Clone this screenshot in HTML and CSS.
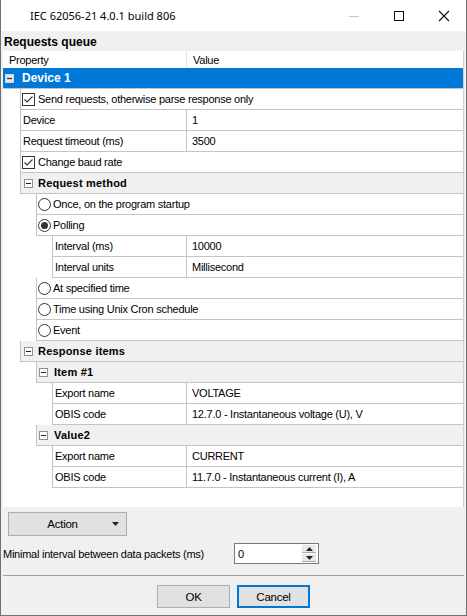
FILE: index.html
```html
<!DOCTYPE html>
<html>
<head>
<meta charset="utf-8">
<link rel="stylesheet" href="styles.css">
</head>
<body>
<div class="window">
  <div class="titlebar">
    <span class="title">IEC 62056-21 4.0.1 build 806</span>
    <div class="controls">
      <span class="ctl"><svg width="12" height="12" viewBox="0 0 12 12"><path d="M1 6.5H11" stroke="#c8c8c8" stroke-width="1"/></svg></span>
      <span class="ctl"><svg width="12" height="12" viewBox="0 0 12 12"><rect x="1.5" y="1.5" width="9" height="9" fill="none" stroke="#111" stroke-width="1"/></svg></span>
      <span class="ctl"><svg width="12" height="12" viewBox="0 0 12 12"><path d="M1 1L11 11M11 1L1 11" stroke="#111" stroke-width="1.1"/></svg></span>
    </div>
  </div>
  <div class="client">
    <div class="group-title">Requests queue</div>
    <div class="grid">
      <div class="head">
        <div class="hcell hprop">Property</div>
        <div class="hcell">Value</div>
      </div>
      <div class="root">
        <svg class="exp" width="9" height="9" viewBox="0 0 9 9"><rect x="0.5" y="0.5" width="8" height="8" fill="#e8e8e8" stroke="#c9d6e6"/><path d="M2 4.5H7" stroke="#1f3c6e" stroke-width="1.4"/></svg>
        <span>Device 1</span>
      </div>

      <div class="row l1 opt">
        <svg class="chk" width="13" height="13" viewBox="0 0 13 13"><rect x="0.5" y="0.5" width="12" height="12" fill="#fff" stroke="#333"/><path d="M2.5 6.5L5 9L10.5 3.5" fill="none" stroke="#333" stroke-width="1.1"/></svg>
        <span>Send requests, otherwise parse response only</span>
      </div>
      <div class="row l1"><div class="prop">Device</div><div class="val">1</div></div>
      <div class="row l1"><div class="prop">Request timeout (ms)</div><div class="val">3500</div></div>
      <div class="row l1 opt">
        <svg class="chk" width="13" height="13" viewBox="0 0 13 13"><rect x="0.5" y="0.5" width="12" height="12" fill="#fff" stroke="#333"/><path d="M2.5 6.5L5 9L10.5 3.5" fill="none" stroke="#333" stroke-width="1.1"/></svg>
        <span>Change baud rate</span>
      </div>
      <div class="row l1 cat">
        <svg class="exp" width="9" height="9" viewBox="0 0 9 9"><rect x="0.5" y="0.5" width="8" height="8" fill="#fff" stroke="#919191"/><path d="M2 4.5H7" stroke="#222" stroke-width="1"/></svg>
        <span>Request method</span>
      </div>
      <div class="row l2 opt">
        <svg class="rad" width="13" height="13" viewBox="0 0 13 13"><circle cx="6.5" cy="6.5" r="6" fill="#fff" stroke="#333"/></svg>
        <span>Once, on the program startup</span>
      </div>
      <div class="row l2 opt">
        <svg class="rad" width="13" height="13" viewBox="0 0 13 13"><circle cx="6.5" cy="6.5" r="6" fill="#fff" stroke="#333"/><circle cx="6.5" cy="6.5" r="3.5" fill="#333"/></svg>
        <span>Polling</span>
      </div>
      <div class="row l3"><div class="prop">Interval (ms)</div><div class="val">10000</div></div>
      <div class="row l3"><div class="prop">Interval units</div><div class="val">Millisecond</div></div>
      <div class="row l2 opt">
        <svg class="rad" width="13" height="13" viewBox="0 0 13 13"><circle cx="6.5" cy="6.5" r="6" fill="#fff" stroke="#333"/></svg>
        <span>At specified time</span>
      </div>
      <div class="row l2 opt">
        <svg class="rad" width="13" height="13" viewBox="0 0 13 13"><circle cx="6.5" cy="6.5" r="6" fill="#fff" stroke="#333"/></svg>
        <span>Time using Unix Cron schedule</span>
      </div>
      <div class="row l2 opt">
        <svg class="rad" width="13" height="13" viewBox="0 0 13 13"><circle cx="6.5" cy="6.5" r="6" fill="#fff" stroke="#333"/></svg>
        <span>Event</span>
      </div>
      <div class="row l1 cat">
        <svg class="exp" width="9" height="9" viewBox="0 0 9 9"><rect x="0.5" y="0.5" width="8" height="8" fill="#fff" stroke="#919191"/><path d="M2 4.5H7" stroke="#222" stroke-width="1"/></svg>
        <span>Response items</span>
      </div>
      <div class="row l2 cat">
        <svg class="exp" width="9" height="9" viewBox="0 0 9 9"><rect x="0.5" y="0.5" width="8" height="8" fill="#fff" stroke="#919191"/><path d="M2 4.5H7" stroke="#222" stroke-width="1"/></svg>
        <span>Item #1</span>
      </div>
      <div class="row l3"><div class="prop">Export name</div><div class="val">VOLTAGE</div></div>
      <div class="row l3"><div class="prop">OBIS code</div><div class="val">12.7.0 - Instantaneous voltage (U), V</div></div>
      <div class="row l2 cat">
        <svg class="exp" width="9" height="9" viewBox="0 0 9 9"><rect x="0.5" y="0.5" width="8" height="8" fill="#fff" stroke="#919191"/><path d="M2 4.5H7" stroke="#222" stroke-width="1"/></svg>
        <span>Value2</span>
      </div>
      <div class="row l3"><div class="prop">Export name</div><div class="val">CURRENT</div></div>
      <div class="row l3"><div class="prop">OBIS code</div><div class="val">11.7.0 - Instantaneous current (I), A</div></div>
    </div>

    <div class="action">
      <span class="action-label">Action</span>
      <svg class="drop" width="7" height="4" viewBox="0 0 7 4"><path d="M0 0H7L3.5 4Z" fill="#222"/></svg>
    </div>

    <div class="interval">
      <span class="interval-label">Minimal interval between data packets (ms)</span>
      <div class="spin">
        <span class="spin-val">0</span>
        <div class="spin-btns">
          <span class="sb"><svg width="7" height="4" viewBox="0 0 7 4"><path d="M0 4H7L3.5 0Z" fill="#222"/></svg></span>
          <span class="sb"><svg width="7" height="4" viewBox="0 0 7 4"><path d="M0 0H7L3.5 4Z" fill="#222"/></svg></span>
        </div>
      </div>
    </div>

    <div class="sep"></div>

    <div class="buttons">
      <div class="btn">OK</div>
      <div class="btn default">Cancel</div>
    </div>
  </div>
</div>
</body>
</html>
```

FILE: styles.css
```css
html, body {
  margin: 0;
  padding: 0;
  background: #f0f0f0;
}
body {
  font-family: "Liberation Sans", Arial, sans-serif;
  font-size: 11px;
  letter-spacing: -0.25px;
  color: #000;
}
.window {
  width: 467px;
  height: 616px;
  box-sizing: border-box;
  border: 1px solid #707070;
  border-top: none;
  background: #f0f0f0;
  display: flex;
  flex-direction: column;
}
.titlebar {
  height: 31px;
  flex: 0 0 31px;
  background: #fff;
  display: flex;
  align-items: center;
}
.title {
  font-family: "Noto Sans", "Liberation Sans", sans-serif;
  font-size: 11px;
  letter-spacing: 0;
  margin-left: 29px;
  color: #000;
  flex: 1;
}
.controls {
  display: flex;
  height: 31px;
}
.ctl {
  width: 45px;
  display: flex;
  align-items: center;
  justify-content: center;
}
.client {
  flex: 1;
  display: flex;
  flex-direction: column;
}
.group-title {
  height: 20px;
  line-height: 22px;
  padding-left: 3px;
  font-weight: bold;
  font-size: 12px;
  letter-spacing: 0;
}
.grid {
  margin-left: 2px;
  width: 461px;
  height: 456px;
  box-sizing: border-box;
  background: #fff;
  border-right: 1px solid #d0d0d0;
  display: flex;
  flex-direction: column;
}
.head {
  height: 17px;
  flex: 0 0 17px;
  display: flex;
}
.hcell {
  line-height: 18px;
  padding-left: 6px;
  color: #000;
}
.hprop {
  width: 184px;
  box-sizing: border-box;
  border-right: 1px solid #e4e4e4;
}
.root {
  height: 21px;
  flex: 0 0 21px;
  box-sizing: border-box;
  background: #0078d7;
  border-bottom: 1px solid #c4c4c4;
  color: #fff;
  display: flex;
  align-items: center;
  font-weight: bold;
  font-size: 12px;
  letter-spacing: 0;
}
.root .exp {
  margin-left: 2px;
  margin-right: 8px;
}
.row {
  height: 20px;
  flex: 0 0 20px;
  border-bottom: 1px solid #c4c4c4;
  border-left: 1px solid #c4c4c4;
  display: flex;
  align-items: center;
  background: #fff;
}
.l1 { margin-left: 17px; }
.l2 { margin-left: 33px; }
.l3 { margin-left: 49px; }
.prop {
  height: 20px;
  line-height: 21px;
  padding-left: 2px;
  box-sizing: border-box;
  border-right: 1px solid #c4c4c4;
}
.l1 .prop { width: 166px; }
.l3 .prop { width: 134px; }
.val {
  padding-left: 5px;
  line-height: 21px;
  white-space: nowrap;
}
.opt span {
  line-height: 21px;
}
.opt .chk {
  margin-left: 1px;
  margin-right: 3px;
}
.opt .rad {
  margin-left: 1px;
  margin-right: 2px;
}
.cat {
  background: #f0f0f0;
  font-weight: bold;
  letter-spacing: 0.2px;
}
.cat span {
  line-height: 21px;
}
.cat .exp {
  margin-left: 3px;
  margin-right: 5px;
}
.l2.cat .exp {
  margin-left: 2px;
  margin-right: 6px;
}
.action {
  margin-top: 5px;
  margin-left: 7px;
  width: 119px;
  height: 24px;
  flex: 0 0 24px;
  box-sizing: border-box;
  background: #e1e1e1;
  border: 1px solid #adadad;
  display: flex;
  align-items: center;
}
.action-label {
  flex: 1;
  text-align: center;
  padding-left: 4px;
  font-size: 11.5px;
}
.drop {
  margin-right: 7px;
}
.interval {
  margin-top: 7px;
  display: flex;
  align-items: center;
  height: 21px;
}
.interval-label {
  flex: 0 0 231px;
  padding-left: 2px;
}
.spin {
  width: 85px;
  height: 21px;
  box-sizing: border-box;
  border: 1px solid #7a7a7a;
  background: #fff;
  display: flex;
  align-items: center;
}
.spin-val {
  flex: 1;
  padding-left: 3px;
}
.spin-btns {
  display: flex;
  flex-direction: column;
  margin-right: 2px;
  gap: 1px;
}
.sb {
  width: 14px;
  height: 7px;
  background: #e8e8e8;
  border-bottom: 1px solid #aaa;
  display: flex;
  align-items: center;
  justify-content: center;
}
.sep {
  margin-top: 11px;
  margin-left: 2px;
  width: 461px;
  height: 1px;
  background: #a0a0a0;
}
.buttons {
  margin-top: 9px;
  display: flex;
  justify-content: center;
  gap: 7px;
}
.btn {
  width: 73px;
  height: 23px;
  box-sizing: border-box;
  background: #e1e1e1;
  border: 1px solid #adadad;
  display: flex;
  align-items: center;
  justify-content: center;
  font-size: 11.5px;
}
.btn.default {
  border: 2px solid #0078d7;
}
```
